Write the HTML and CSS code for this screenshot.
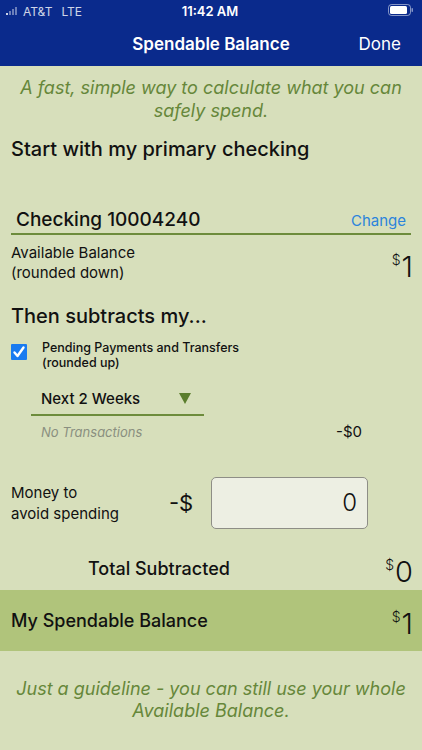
FILE: index.html
```html
<!doctype html>
<html>
<head>
    <meta charset="utf-8">
    <title>Spendable Balance</title>
    <link rel="stylesheet" href="styles.css">
</head>
<body>
    <div class="top">
        <div class="status">
            <div class="carrier">
                <svg width="14" height="8" viewBox="0 0 14 8">
                    <rect x="0" y="6" width="2" height="2" fill="#fff"/>
                    <rect x="3" y="4" width="2" height="4" fill="#fff" opacity=".5"/>
                    <rect x="6" y="2" width="2" height="6" fill="#fff" opacity=".5"/>
                    <rect x="9" y="0" width="2" height="8" fill="#fff" opacity=".5"/>
                </svg>
                <span>AT&amp;T</span><span class="lte">LTE</span>
            </div>
            <div class="clock">11:42 AM</div>
            <div class="battery">
                <svg width="26" height="12" viewBox="0 0 26 12">
                    <rect x="0.5" y="0.5" width="22" height="11" rx="3" fill="none" stroke="#fff" opacity=".5"/>
                    <rect x="2" y="2" width="17" height="8" rx="1.5" fill="#fff"/>
                    <rect x="23.5" y="4" width="1.5" height="4" rx=".7" fill="#fff" opacity=".5"/>
                </svg>
            </div>
        </div>
        <div class="navbar">
            <div class="nav-title">Spendable Balance</div>
            <div class="nav-done">Done</div>
        </div>
    </div>

    <p class="note">A fast, simple way to calculate what you can safely spend.</p>

    <h2 class="heading">Start with my primary checking</h2>

    <div class="account">
        <span class="account-name">Checking 10004240</span>
        <span class="change">Change</span>
    </div>

    <div class="row balance-row">
        <div class="label">Available Balance<br>(rounded down)</div>
        <div class="amount"><sup>$</sup>1</div>
    </div>

    <h2 class="heading heading-then">Then subtracts my...</h2>

    <div class="pending">
        <span class="check">
            <svg width="16" height="16" viewBox="0 0 16 16">
                <rect width="16" height="16" rx="1" fill="#1a7bf0"/>
                <path d="M3.5 8.5 L6.5 12 L12.5 3.5" stroke="#fff" stroke-width="2.4" fill="none" stroke-linecap="round" stroke-linejoin="round"/>
            </svg>
        </span>
        <span class="pending-text">Pending Payments and Transfers<br>(rounded up)</span>
    </div>

    <div class="select">
        <span>Next 2 Weeks</span>
        <span class="arrow"></span>
    </div>

    <div class="none-row">
        <span class="none">No Transactions</span>
        <span class="none-amt">-$0</span>
    </div>

    <div class="avoid">
        <div class="avoid-label">Money to<br>avoid spending</div>
        <div class="minus">-$</div>
        <div class="input">0</div>
    </div>

    <div class="total">
        <span class="total-label">Total Subtracted</span>
        <span class="amount"><sup>$</sup>0</span>
    </div>

    <div class="result">
        <span class="result-label">My Spendable Balance</span>
        <span class="amount"><sup>$</sup>1</span>
    </div>

    <p class="note note-bottom">Just a guideline - you can still use your whole Available Balance.</p>
</body>
</html>
```

FILE: styles.css
```css
body {
    margin: 0;
    width: 422px;
    height: 750px;
    background: #d7dfbb;
    font-family: Inter, "Noto Sans", sans-serif;
    color: #111;
    overflow: hidden;
}

.top {
    background: #0a2a8c;
    color: #fff;
    height: 66px;
}

.status {
    height: 22px;
    display: flex;
    align-items: center;
    justify-content: space-between;
    padding: 0 8px 0 6px;
    font-size: 12px;
}

.carrier {
    display: flex;
    align-items: center;
    gap: 3px;
    width: 120px;
    opacity: .8;
}

.lte {
    margin-left: 6px;
}

.clock {
    font-weight: 600;
    font-size: 13px;
}

.battery {
    width: 120px;
    text-align: right;
}

.navbar {
    height: 44px;
    display: flex;
    align-items: center;
    justify-content: center;
    position: relative;
}

.nav-title {
    font-size: 17px;
    font-weight: 600;
}

.nav-done {
    position: absolute;
    right: 21px;
    font-size: 17px;
}

.note {
    margin: 10px 12px 0;
    text-align: center;
    font-style: italic;
    color: #66873a;
    font-size: 18px;
    line-height: 23px;
}

.heading {
    margin: 14px 11px 0;
    font-size: 20px;
    font-weight: 500;
    line-height: 26px;
}

.account {
    margin: 46px 11px 0;
    border-bottom: 2px solid #6d8c3c;
    display: flex;
    justify-content: space-between;
    align-items: baseline;
    padding: 0 5px 2px;
}

.account-name {
    font-size: 19px;
    font-weight: 500;
}

.change {
    color: #2b84dc;
    font-size: 15px;
}

.row {
    display: flex;
    justify-content: space-between;
    align-items: center;
    margin: 0 9px 0 11px;
}

.balance-row {
    margin-top: 8px;
}

.label {
    font-size: 15px;
    line-height: 20px;
}

.amount {
    font-size: 29px;
    font-weight: 300;
    line-height: 30px;
}

.amount sup {
    font-size: 14px;
    vertical-align: 12px;
    margin-right: 1px;
}

.heading-then {
    margin-top: 20px;
}

.pending {
    display: flex;
    margin: 11px 11px 0;
    gap: 15px;
}

.check {
    padding-top: 4px;
}

.pending-text {
    font-size: 12.5px;
    font-weight: 500;
    line-height: 15px;
}

.select {
    margin: 19px 0 0 31px;
    width: 163px;
    padding: 0 0 6px 10px;
    border-bottom: 2px solid #6d8c3c;
    display: flex;
    justify-content: space-between;
    align-items: center;
    font-size: 15px;
    font-weight: 500;
}

.arrow {
    width: 0;
    height: 0;
    border-left: 6px solid transparent;
    border-right: 6px solid transparent;
    border-top: 11px solid #5a7d2c;
    margin-right: 13px;
}

.none-row {
    display: flex;
    justify-content: space-between;
    margin: 6px 60px 0 41px;
    align-items: baseline;
}

.none {
    font-size: 13px;
    font-style: italic;
    color: #8a8f80;
}

.none-amt {
    font-size: 15px;
}

.avoid {
    display: flex;
    align-items: center;
    margin: 36px 0 0 11px;
}

.avoid-label {
    font-size: 15px;
    line-height: 21px;
    width: 158px;
}

.minus {
    font-size: 22px;
    width: 42px;
}

.input {
    width: 145px;
    height: 50px;
    border: 1px solid #8e8e86;
    border-radius: 5px;
    background: #edefe3;
    text-align: right;
    padding-right: 10px;
    font-size: 24px;
    line-height: 50px;
    font-weight: 300;
}

.total {
    display: flex;
    justify-content: space-between;
    align-items: center;
    margin: 21px 9px 0 88px;
}

.total-label {
    font-size: 18px;
    font-weight: 500;
}

.result {
    margin-top: 3px;
    height: 61px;
    background: #b0c47b;
    display: flex;
    justify-content: space-between;
    align-items: center;
    padding: 0 9px 0 11px;
}

.result-label {
    font-size: 18px;
    font-weight: 500;
}

.note-bottom {
    margin-top: 27px;
    line-height: 22px;
}
```
